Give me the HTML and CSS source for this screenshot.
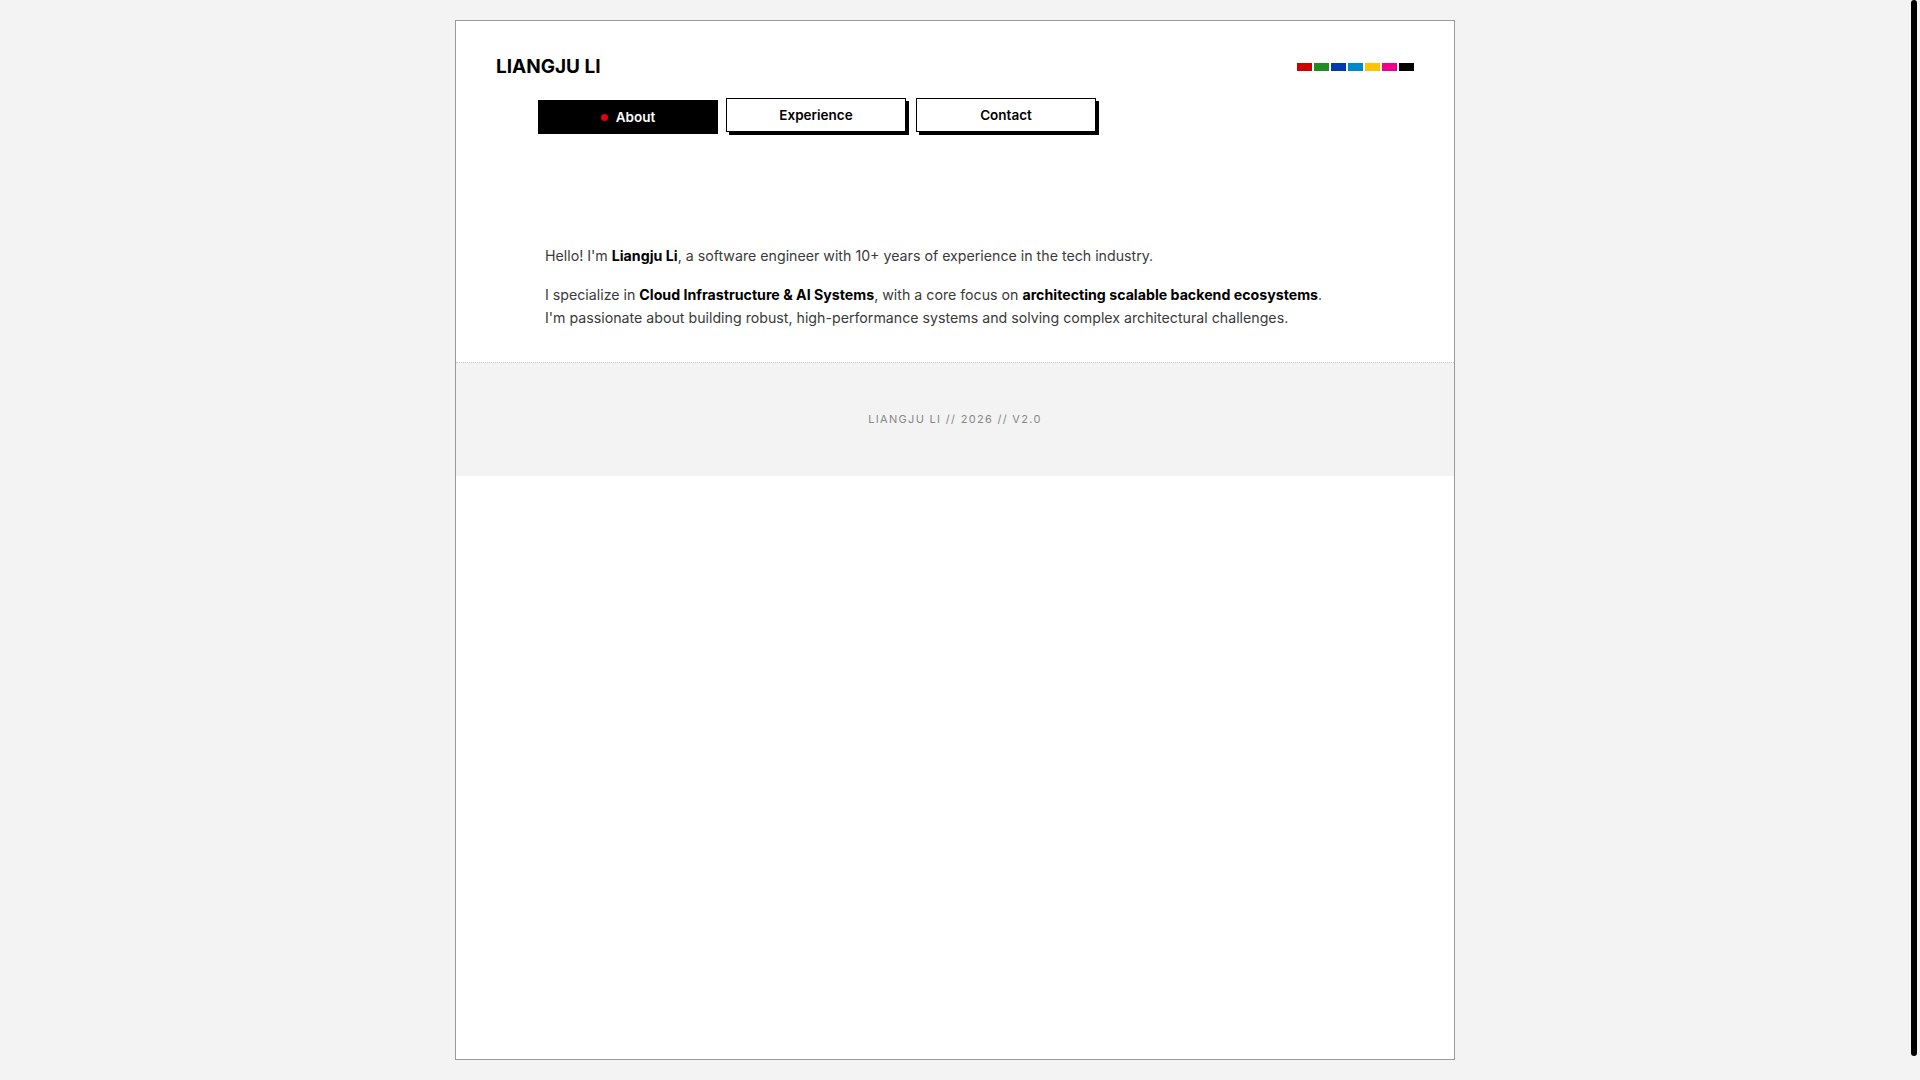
FILE: index.html
```html
<!DOCTYPE html>
<html lang="en">
<head>
<meta charset="utf-8">
<title>Liangju Li</title>
<link rel="stylesheet" href="styles.css">
</head>
<body>
<div class="page">
  <header class="top">
    <div class="brand">LIANGJU LI</div>
    <div class="swatches">
      <span class="sw sw-red"></span>
      <span class="sw sw-green"></span>
      <span class="sw sw-blue"></span>
      <span class="sw sw-sky"></span>
      <span class="sw sw-yellow"></span>
      <span class="sw sw-pink"></span>
      <span class="sw sw-black"></span>
    </div>
  </header>
  <nav class="tabs">
    <a class="tab tab-active" href="#"><span class="dot"></span>About</a>
    <a class="tab" href="#">Experience</a>
    <a class="tab" href="#">Contact</a>
  </nav>
  <main class="content">
    <p>Hello! I'm <strong>Liangju Li</strong>, a software engineer with 10+ years of experience in the tech industry.</p>
    <p>I specialize in <strong>Cloud Infrastructure &amp; AI Systems</strong>, with a core focus on <strong>architecting scalable backend ecosystems</strong>.<br>I'm passionate about building robust, high-performance systems and solving complex architectural challenges.</p>
  </main>
  <footer class="foot">LIANGJU LI // 2026 // V2.0</footer>
</div>
<div class="scroll-thumb"></div>
</body>
</html>
```
FILE: styles.css
```css
html {
  background: #f3f3f3;
}
body {
  margin: 0;
  padding: 20px 10px 20px 0;
  background: #f3f3f3;
  font-family: Inter, "Liberation Sans", sans-serif;
  color: #333;
}
.page {
  box-sizing: border-box;
  width: 1000px;
  min-height: 1040px;
  margin: 0 auto;
  background: #fff;
  border: 1px solid #999;
}
.scroll-thumb {
  position: fixed;
  top: 0;
  right: 3px;
  width: 6px;
  height: 1056px;
  border-radius: 3px;
  background: #000;
}
.top {
  display: flex;
  justify-content: space-between;
  align-items: center;
  padding: 35px 40px 0;
}
.brand {
  font-size: 19px;
  font-weight: 700;
  color: #000;
  letter-spacing: 0;
  line-height: 22px;
}
.swatches {
  display: flex;
  gap: 2px;
}
.sw {
  width: 15px;
  height: 8px;
  display: block;
}
.sw-red { background: #cc0000; }
.sw-green { background: #228b22; }
.sw-blue { background: #0039b0; }
.sw-sky { background: #0088cc; }
.sw-yellow { background: #ffc400; }
.sw-pink { background: #ee0088; }
.sw-black { background: #000; }
.tabs {
  display: flex;
  gap: 10px;
  margin-top: 20px;
  padding-left: 80px;
}
.tab {
  box-sizing: border-box;
  width: 180px;
  height: 34px;
  display: flex;
  align-items: center;
  justify-content: center;
  gap: 8px;
  border: 1px solid #000;
  background: #fff;
  color: #000;
  text-decoration: none;
  font-size: 13.5px;
  font-weight: 600;
  box-shadow: 3px 3px 0 #000;
}
.tab-active {
  background: #000;
  color: #fff;
  box-shadow: none;
  transform: translate(2px, 2px);
}
.dot {
  width: 7px;
  height: 7px;
  border-radius: 50%;
  background: #e00010;
  display: block;
}
.content {
  padding: 112px 89px 32px;
  font-size: 14.2px;
  line-height: 23.2px;
  color: #3a3a3a;
}
.content p {
  margin: 0 0 16px;
}
.content p:last-child {
  margin-bottom: 0;
}
.content strong {
  color: #000;
  font-weight: 700;
}
.foot {
  background: #f3f3f3;
  border-top: 1px dotted #c8c8c8;
  padding: 49px 0 50px;
  text-align: center;
  font-size: 11px;
  line-height: 14px;
  letter-spacing: 1.3px;
  color: #888;
}
```
